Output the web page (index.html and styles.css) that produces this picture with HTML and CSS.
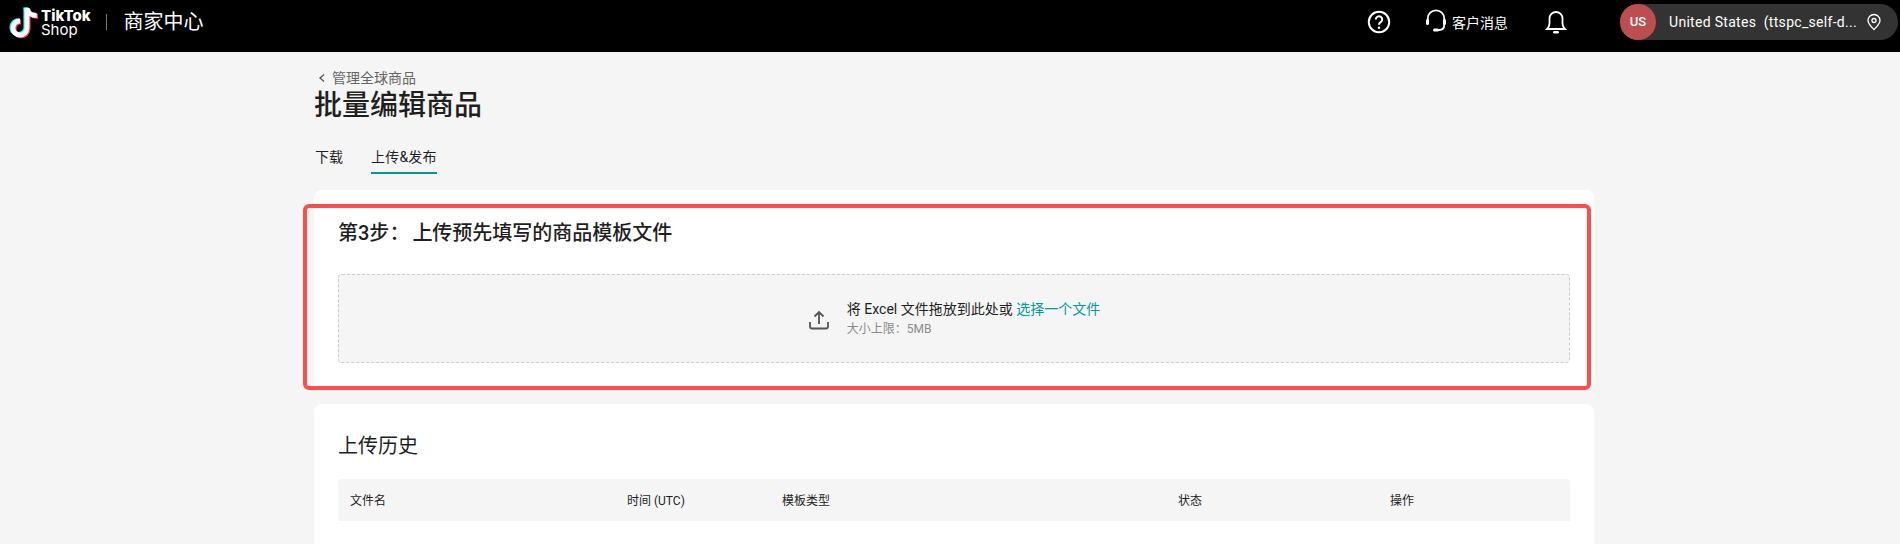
FILE: index.html
```html
<!DOCTYPE html>
<html lang="zh-CN">
<head>
    <meta charset="UTF-8">
    <meta name="viewport" content="width=device-width, initial-scale=1.0">
    <title>批量编辑商品</title>
    <link rel="stylesheet" href="styles.css">
</head>
<body>
    <header class="topbar">
        <div class="brand">
            <svg class="brand_icon" width="28" height="32" viewBox="0 0 28 32">
                <path class="note_cyan" d="M15.800 1.500v19.800a7 7 0 1 1-7-7" />
                <path class="note_cyan" d="M15.800 1.500c.5 4.300 4.300 7.500 10 7.500" />
                <path class="note_red" d="M18.200 3v19.800a7 7 0 1 1-7-7" />
                <path class="note_red" d="M18.200 3c.5 4.300 4.300 7.500 9.800 7.500" />
                <path class="note_white" d="M17 2.200V22a7 7 0 1 1-7-7" />
                <path class="note_white" d="M17 2.200c.5 4.300 4.300 7.500 9.800 7.500" />
            </svg>
            <div class="brand_name">
                <span class="brand_tiktok">TikTok</span>
                <span class="brand_shop">Shop</span>
            </div>
            <span class="brand_line"></span>
            <span class="brand_title">商家中心</span>
        </div>
        <div class="topbar_right">
            <svg class="help_icon" width="24" height="24" viewBox="0 0 24 24">
                <circle cx="12" cy="12" r="10.200" />
                <path d="M8.800 9.500a3.200 3.200 0 1 1 4.900 2.700c-1.100.7-1.700 1.300-1.700 2.500" />
                <circle class="dot" cx="12" cy="17.700" r="1.200" />
            </svg>
            <div class="service">
                <svg width="22" height="24" viewBox="0 0 22 24">
                    <path class="line" d="M2.800 11V9.500a8.200 8.200 0 0 1 16.400 0V16c0 3-2 5-5 5H11" />
                    <rect class="solid" x="1" y="10" width="3" height="6" rx="1.500" />
                    <rect class="solid" x="18" y="10" width="3" height="6" rx="1.500" />
                    <rect class="solid" x="8" y="19.500" width="6" height="3" rx="1.500" />
                </svg>
                <span>客户消息</span>
            </div>
            <svg class="bell_icon" width="22" height="24" viewBox="0 0 22 24">
                <path d="M2 19h18c-1.500-1.500-2.500-3-2.500-5.500V8.500a6.500 6.500 0 0 0-13 0v5C4.500 16 3.500 17.500 2 19z" />
                <rect x="8" y="21" width="6" height="2.500" rx="1.250" />
            </svg>
            <div class="account">
                <span class="account_badge">US</span>
                <span class="account_name">United States&nbsp;&nbsp;(ttspc_self-d...</span>
                <svg width="16" height="18" viewBox="0 0 16 18">
                    <path d="M8 16.500c-3-3-6-5.600-6-9a6 6 0 0 1 12 0c0 3.400-3 6-6 9z" />
                    <circle cx="8" cy="7.500" r="2" />
                </svg>
            </div>
        </div>
    </header>

    <main class="page">
        <div class="back">
            <svg width="10" height="10" viewBox="0 0 10 10"><path d="M7 1.500 3 5l4 3.500" /></svg>
            <span>管理全球商品</span>
        </div>
        <h1 class="page_title">批量编辑商品</h1>
        <nav class="tabs">
            <span class="tab">下载</span>
            <span class="tab tab_active">上传&amp;发布</span>
        </nav>

        <section class="card">
            <h2 class="card_title">第3步<span class="colon">：</span>上传预先填写的商品模板文件</h2>
            <div class="dropzone">
                <svg class="upload_icon" width="22" height="20" viewBox="0 0 22 20">
                    <path d="M11 14V2.500M6.500 6.500 11 2l4.500 4.500M2 12v4.500a2 2 0 0 0 2 2h14a2 2 0 0 0 2-2V12" />
                </svg>
                <div>
                    <p class="drop_text">将 Excel 文件拖放到此处或 <span class="drop_link">选择一个文件</span></p>
                    <p class="drop_hint">大小上限：5MB</p>
                </div>
            </div>
            <!-- marca vermelha por cima do card -->
            <div class="highlight"></div>
        </section>

        <section class="card card_history">
            <h2 class="history_title">上传历史</h2>
            <div class="table_head">
                <span class="col_file">文件名</span>
                <span class="col_time">时间 (UTC)</span>
                <span class="col_type">模板类型</span>
                <span class="col_status">状态</span>
                <span class="col_action">操作</span>
            </div>
        </section>
    </main>
</body>
</html>
```

FILE: styles.css
```css
* {
    box-sizing: border-box;
}
html, body {
    height: 544px;
    overflow: hidden;
}
body {
    margin: 0;
    background-color: #f5f5f5;
    color: #1f1f1f;
    font-family: Roboto, "Noto Sans CJK SC", sans-serif;
    font-size: 14px;
}
p, h1, h2 {
    margin: 0;
}
.topbar {
    height: 52px;
    padding: 0 2px 0 10px;
    background-color: #000;
    color: #fff;
    display: flex;
    align-items: center;
    justify-content: space-between;
}
.brand {
    display: flex;
    align-items: center;
}
.brand_icon {
    margin-top: -8px;
    margin-right: 3px;
    overflow: visible;
}
.brand_icon path {
    fill: none;
    stroke-width: 4.800px;
}
.note_cyan {
    stroke: #25f4ee;
}
.note_red {
    stroke: #fe2c55;
}
.note_white {
    stroke: #fff;
}
.brand_name {
    margin-top: -8px;
    display: flex;
    flex-direction: column;
    font-family: Inter, sans-serif;
}
.brand_tiktok {
    font-size: 15px;
    line-height: 15px;
    font-weight: 800;
}
.brand_shop {
    font-size: 15px;
    line-height: 14px;
}
.brand_line {
    width: 1px;
    height: 16px;
    margin: -8px 17px 0 15px;
    background-color: #777;
}
.brand_title {
    font-size: 20px;
    line-height: 28px;
    margin-top: -8px;
}
.topbar_right {
    display: flex;
    align-items: center;
    margin-top: -8px;
}
.help_icon circle, .help_icon path {
    fill: none;
    stroke: #fff;
    stroke-width: 2px;
}
.help_icon .dot {
    fill: #fff;
    stroke: none;
}
.service {
    margin-left: 34px;
    display: flex;
    align-items: center;
    gap: 5px;
    font-size: 14px;
}
.service svg {
    margin-top: -2px;
}
.service .line {
    fill: none;
    stroke: #fff;
    stroke-width: 1.800px;
}
.service .solid {
    fill: #fff;
}
.bell_icon {
    margin-left: 37px;
}
.bell_icon path {
    fill: none;
    stroke: #fff;
    stroke-width: 1.800px;
}
.bell_icon rect {
    fill: #fff;
}
.account {
    margin-left: 53px;
    width: 278px;
    height: 36px;
    border-radius: 18px;
    background-color: #333;
    display: flex;
    align-items: center;
}
.account_badge {
    width: 36px;
    height: 36px;
    border-radius: 50%;
    background-color: #bd4e50;
    font-size: 13px;
    font-weight: 500;
    line-height: 36px;
    text-align: center;
}
.account_name {
    margin-left: 13px;
    width: 197px;
    letter-spacing: .3px;
    white-space: nowrap;
}
.account svg path, .account svg circle {
    fill: none;
    stroke: #fff;
    stroke-width: 1.300px;
}
.page {
    width: 1594px;
    padding: 16px 0 0 314px;
}
.back {
    height: 20px;
    padding-left: 3px;
    display: flex;
    align-items: center;
    gap: 5px;
    color: #666;
    line-height: 20px;
}
.back svg path {
    fill: none;
    stroke: #555;
    stroke-width: 1.300px;
}
.page_title {
    font-size: 28px;
    font-weight: 500;
    line-height: 36px;
}
.tabs {
    margin-top: 22px;
    padding-left: 1px;
    display: flex;
    gap: 28px;
}
.tab {
    height: 28px;
    line-height: 22px;
}
.tab_active {
    letter-spacing: .2px;
    border-bottom: 2px solid #009995;
}
.card {
    position: relative;
    margin-top: 16px;
    padding: 28px 24px 26px;
    border-radius: 8px;
    background-color: #fff;
}
.card_title {
    font-size: 20px;
    font-weight: 500;
    line-height: 28px;
}
.colon {
    margin-right: 3px;
    font-family: "Noto Sans CJK TC", sans-serif;
}
.dropzone {
    height: 89px;
    margin-top: 27px;
    border: 1px dashed #ccc;
    border-radius: 4px;
    background-color: #f5f5f5;
    display: flex;
    align-items: center;
    justify-content: center;
    gap: 17px;
}
.upload_icon {
    margin-top: 2px;
}
.upload_icon path {
    fill: none;
    stroke: #555;
    stroke-width: 1.800px;
}
.drop_text {
    line-height: 20px;
}
.drop_link {
    color: #009995;
}
.drop_hint {
    font-size: 12px;
    line-height: 20px;
    color: #8a8a8a;
}
.highlight {
    position: absolute;
    left: -11px;
    right: 3px;
    top: 14px;
    bottom: -1px;
    border: 4px solid #fc4e4a;
    border-radius: 6px;
}
.card_history {
    height: 141px;
    margin-top: 15px;
    padding: 28px 24px 0;
    border-radius: 8px 8px 0 0;
}
.history_title {
    font-size: 20px;
    font-weight: 400;
    line-height: 28px;
}
.table_head {
    height: 42px;
    margin-top: 19px;
    border-radius: 4px 4px 0 0;
    background-color: #f5f5f5;
    font-size: 12px;
    display: grid;
    grid-template-columns: 277px 155px 396px 212px 192px;
    align-items: center;
}
.table_head span {
    padding-left: 12px;
    padding-bottom: 1px;
}
```
